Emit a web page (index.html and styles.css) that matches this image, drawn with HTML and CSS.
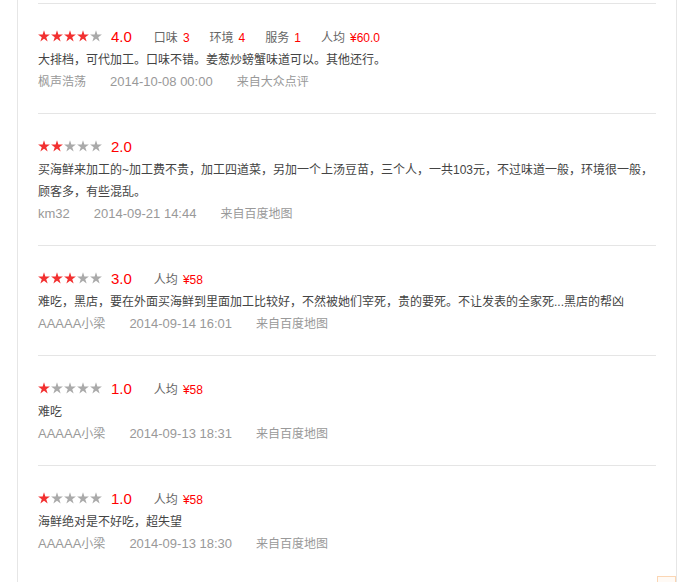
FILE: index.html
```html
<!DOCTYPE html>
<html lang="zh-CN">
<head>
<meta charset="utf-8">
<title>评论</title>
<link rel="stylesheet" href="styles.css">
</head>
<body>
<svg width="0" height="0" class="defs">
  <defs>
    <polygon id="st" points="6,0.3 7.39,4.58 11.9,4.58 8.25,7.23 9.64,11.52 6,8.87 2.36,11.52 3.75,7.23 0.1,4.58 4.61,4.58"/>
  </defs>
</svg>
<div class="panel">
  <div class="review">
    <div class="score-row">
      <div class="stars">
        <svg class="star on" viewBox="0 0 12 12"><use href="#st"/></svg>
        <svg class="star on" viewBox="0 0 12 12"><use href="#st"/></svg>
        <svg class="star on" viewBox="0 0 12 12"><use href="#st"/></svg>
        <svg class="star on" viewBox="0 0 12 12"><use href="#st"/></svg>
        <svg class="star off" viewBox="0 0 12 12"><use href="#st"/></svg>
      </div>
      <span class="rating">4.0</span>
      <span class="sub">口味<b>3</b></span>
      <span class="sub">环境<b>4</b></span>
      <span class="sub">服务<b>1</b></span>
      <span class="sub">人均<b>¥60.0</b></span>
    </div>
    <p class="content">大排档，可代加工。口味不错。姜葱炒螃蟹味道可以。其他还行。</p>
    <div class="meta"><span>枫声浩荡</span><span class="en">2014-10-08 00:00</span><span>来自大众点评</span></div>
  </div>

  <div class="review">
    <div class="score-row">
      <div class="stars">
        <svg class="star on" viewBox="0 0 12 12"><use href="#st"/></svg>
        <svg class="star on" viewBox="0 0 12 12"><use href="#st"/></svg>
        <svg class="star off" viewBox="0 0 12 12"><use href="#st"/></svg>
        <svg class="star off" viewBox="0 0 12 12"><use href="#st"/></svg>
        <svg class="star off" viewBox="0 0 12 12"><use href="#st"/></svg>
      </div>
      <span class="rating">2.0</span>
    </div>
    <p class="content">买海鲜来加工的~加工费不贵，加工四道菜，另加一个上汤豆苗，三个人，一共103元，不过味道一般，环境很一般，顾客多，有些混乱。</p>
    <div class="meta"><span class="en">km32</span><span class="en">2014-09-21 14:44</span><span>来自百度地图</span></div>
  </div>

  <div class="review">
    <div class="score-row">
      <div class="stars">
        <svg class="star on" viewBox="0 0 12 12"><use href="#st"/></svg>
        <svg class="star on" viewBox="0 0 12 12"><use href="#st"/></svg>
        <svg class="star on" viewBox="0 0 12 12"><use href="#st"/></svg>
        <svg class="star off" viewBox="0 0 12 12"><use href="#st"/></svg>
        <svg class="star off" viewBox="0 0 12 12"><use href="#st"/></svg>
      </div>
      <span class="rating">3.0</span>
      <span class="sub">人均<b>¥58</b></span>
    </div>
    <p class="content">难吃，黑店，要在外面买海鲜到里面加工比较好，不然被她们宰死，贵的要死。不让发表的全家死...黑店的帮凶</p>
    <div class="meta"><span><span class="en">AAAAA</span>小梁</span><span class="en">2014-09-14 16:01</span><span>来自百度地图</span></div>
  </div>

  <div class="review">
    <div class="score-row">
      <div class="stars">
        <svg class="star on" viewBox="0 0 12 12"><use href="#st"/></svg>
        <svg class="star off" viewBox="0 0 12 12"><use href="#st"/></svg>
        <svg class="star off" viewBox="0 0 12 12"><use href="#st"/></svg>
        <svg class="star off" viewBox="0 0 12 12"><use href="#st"/></svg>
        <svg class="star off" viewBox="0 0 12 12"><use href="#st"/></svg>
      </div>
      <span class="rating">1.0</span>
      <span class="sub">人均<b>¥58</b></span>
    </div>
    <p class="content">难吃</p>
    <div class="meta"><span><span class="en">AAAAA</span>小梁</span><span class="en">2014-09-13 18:31</span><span>来自百度地图</span></div>
  </div>

  <div class="review">
    <div class="score-row">
      <div class="stars">
        <svg class="star on" viewBox="0 0 12 12"><use href="#st"/></svg>
        <svg class="star off" viewBox="0 0 12 12"><use href="#st"/></svg>
        <svg class="star off" viewBox="0 0 12 12"><use href="#st"/></svg>
        <svg class="star off" viewBox="0 0 12 12"><use href="#st"/></svg>
        <svg class="star off" viewBox="0 0 12 12"><use href="#st"/></svg>
      </div>
      <span class="rating">1.0</span>
      <span class="sub">人均<b>¥58</b></span>
    </div>
    <p class="content">海鲜绝对是不好吃，超失望</p>
    <div class="meta"><span><span class="en">AAAAA</span>小梁</span><span class="en">2014-09-13 18:30</span><span>来自百度地图</span></div>
  </div>
</div>
<div class="corner"></div>
</body>
</html>
```
FILE: styles.css
```css
html, body {
  margin: 0;
  background: #fff;
}
body {
  font-family: "Liberation Sans", "Noto Sans CJK SC", sans-serif;
  font-size: 12px;
  color: #444;
  overflow: hidden;
}
.defs {
  position: absolute;
  width: 0;
  height: 0;
}
.panel {
  margin-left: 17px;
  width: 618px;
  min-height: 582px;
  padding: 3px 20px 0;
  border-left: 1px solid #e6e6e6;
  border-right: 1px solid #e6e6e6;
}
.review {
  border-top: 1px solid #e5e5e5;
  padding: 21px 0 20px;
}
.score-row {
  display: flex;
  align-items: center;
  height: 22px;
}
.stars {
  display: flex;
  gap: 1px;
}
.star {
  width: 12px;
  height: 12px;
  display: block;
}
.star.on { fill: #f23030; }
.star.off { fill: #aaaaaa; }
.rating {
  margin-left: 9px;
  margin-right: 22px;
  font-size: 15px;
  color: #f00;
}
.sub {
  margin-right: 20px;
  color: #666;
  font-size: 12px;
}
.sub b {
  font-weight: normal;
  color: #f00;
  margin-left: 5px;
}
.content {
  margin: 2px 0 0;
  line-height: 22px;
  color: #444;
}
.meta {
  display: flex;
  align-items: baseline;
  gap: 24px;
  line-height: 22px;
  color: #999;
}
.meta .en {
  font-size: 13px;
}
.corner {
  position: fixed;
  left: 657px;
  top: 576px;
  width: 17px;
  height: 10px;
  border: 1px solid #fbd6b4;
  border-bottom: none;
  background: #fffaf5;
}
```
